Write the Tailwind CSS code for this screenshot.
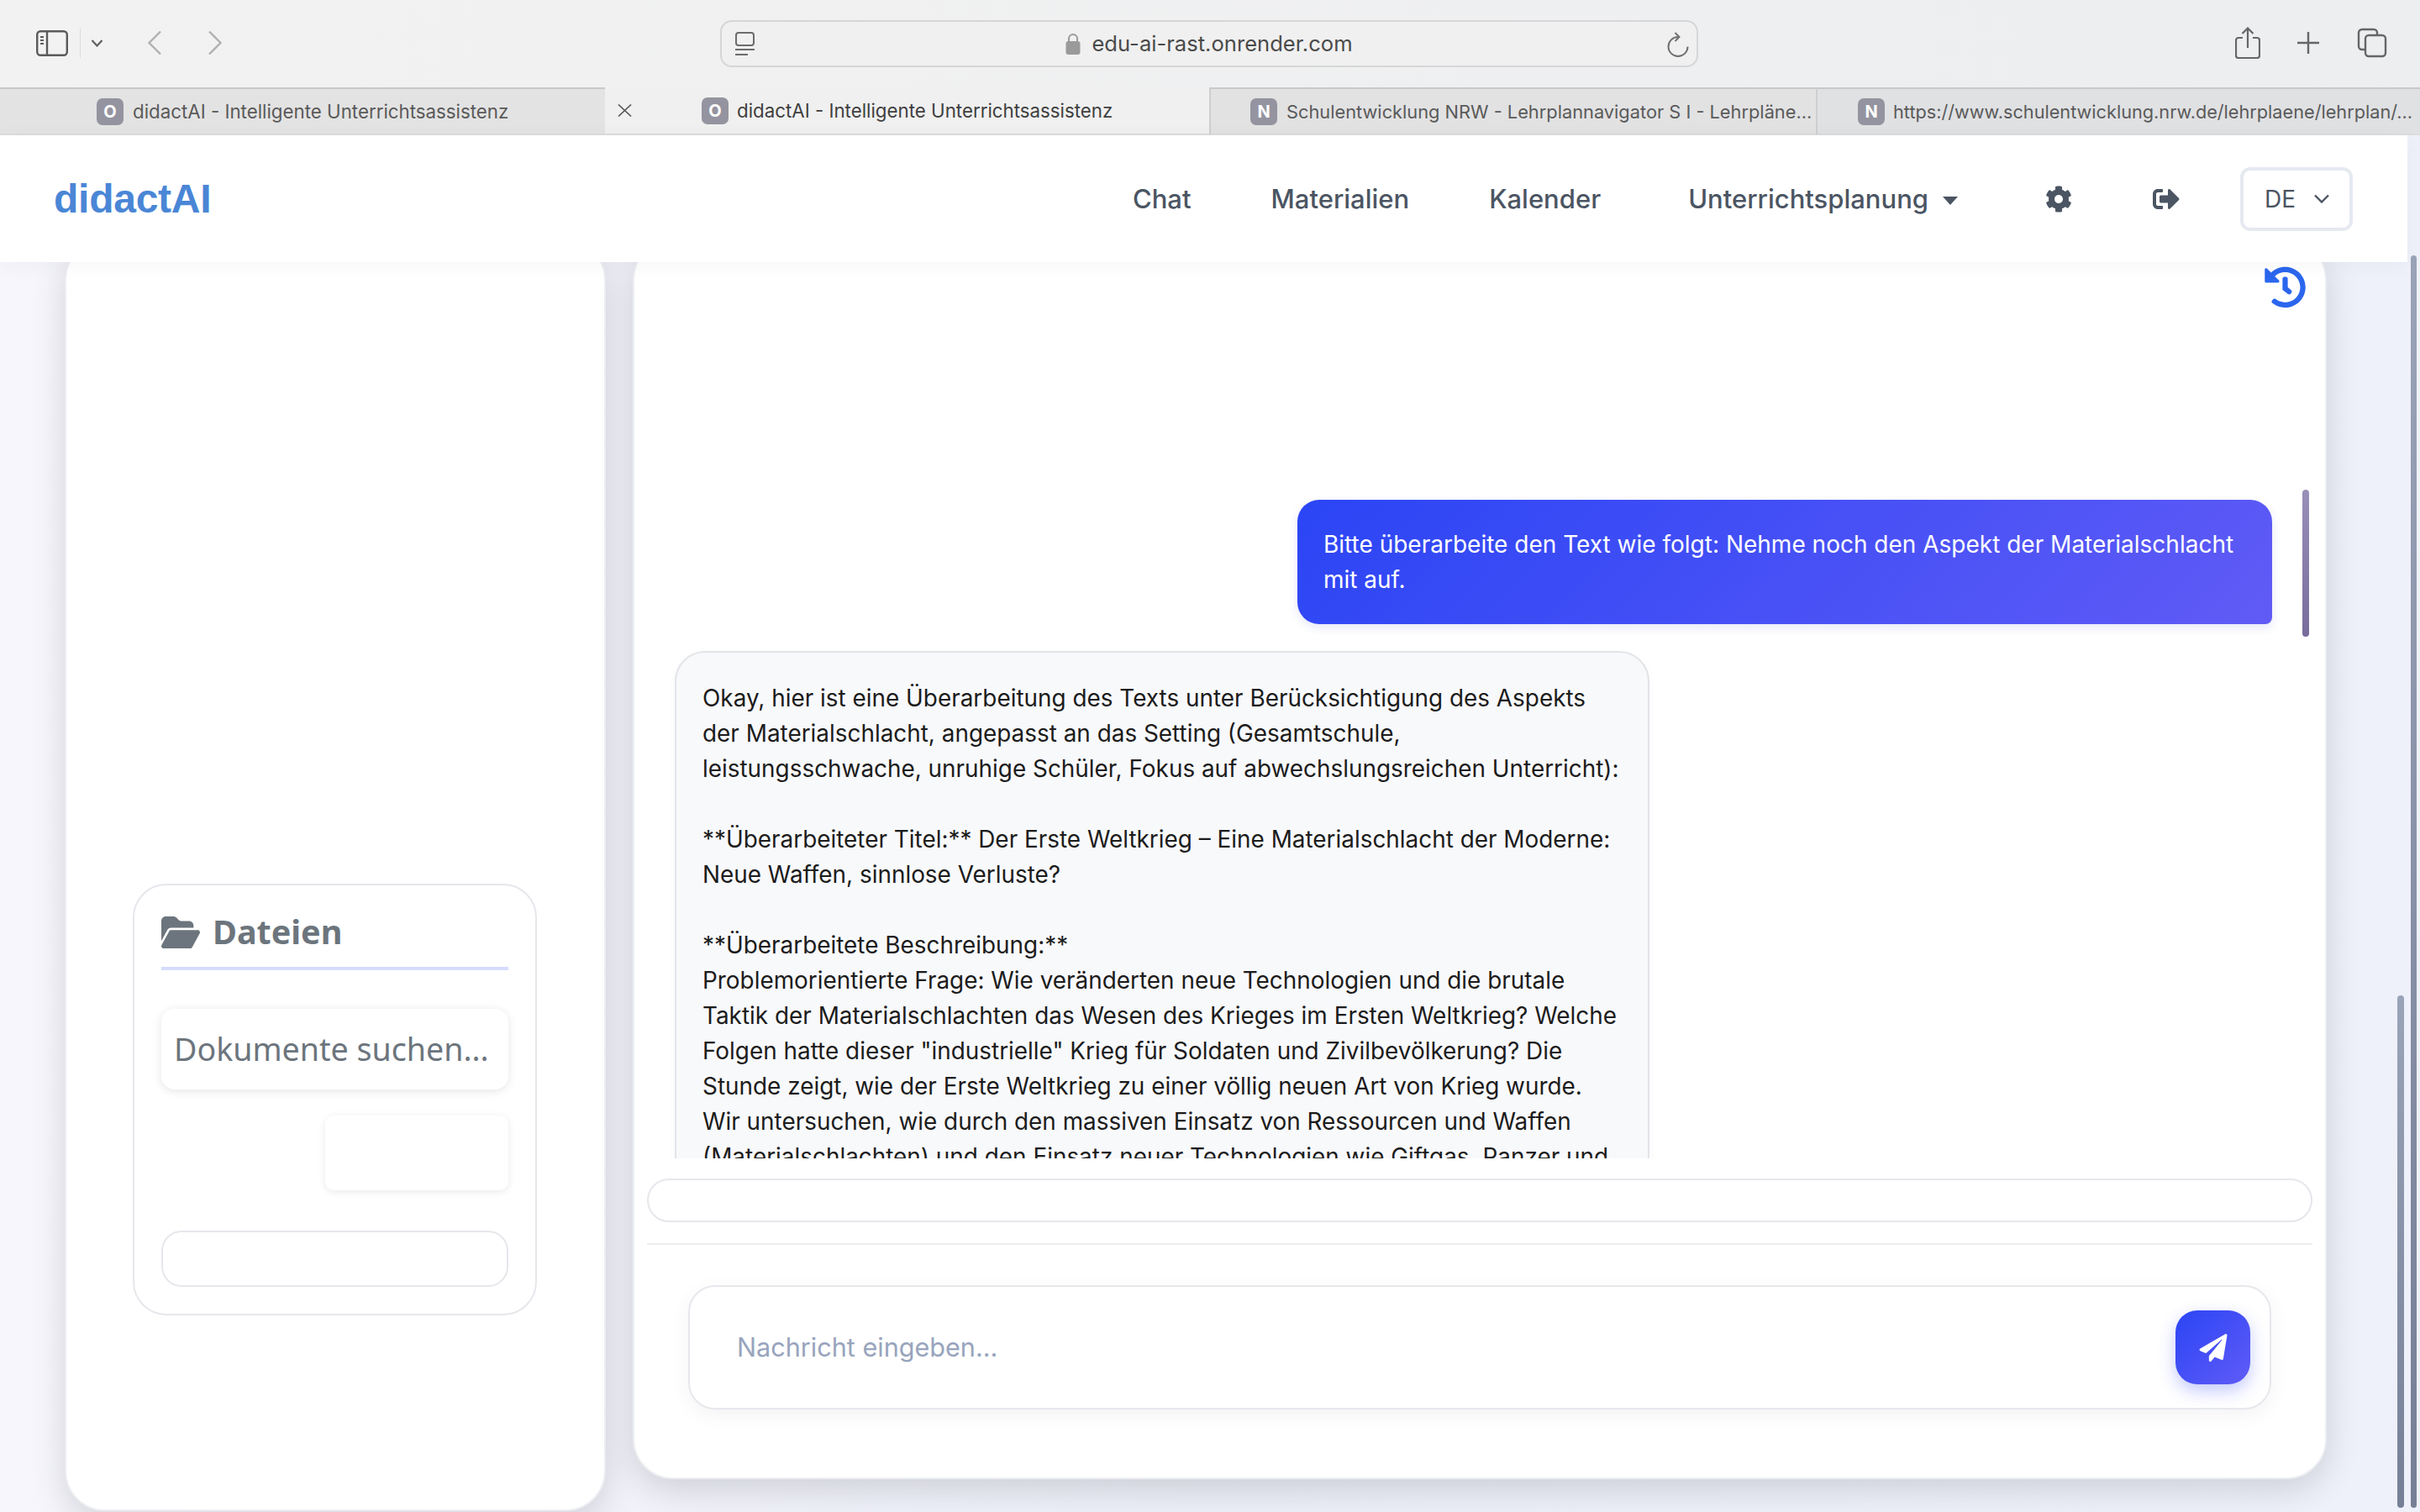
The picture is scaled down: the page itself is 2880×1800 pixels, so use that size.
<!DOCTYPE html>
<html lang="de">
<head>
<meta charset="utf-8">
<title>didactAI</title>
<script src="https://cdn.jsdelivr.net/npm/@tailwindcss/browser@4"></script>
</head>
<body class="m-0 font-['Inter',sans-serif]">
<div class="w-[2880px] h-[1800px] flex flex-col overflow-hidden bg-[#eef1f9]">
  <!-- toolbar -->
  <div class="h-[104px] flex items-start bg-gradient-to-r from-[#f2f2f2] to-[#edeef0] shrink-0">
    <div class="w-[857px] h-full relative shrink-0 flex items-center text-[#5c5c5c]">
      <svg class="ml-[43px] mt-[-2px]" width="38" height="31" viewBox="0 0 38 31" fill="none" stroke="#5a5a5a" stroke-width="2.4"><rect x="1.2" y="1.2" width="35.6" height="28.6" rx="4"/><path d="M13 1v29"/><path d="M5 8h4M5 12h4M5 16h4" stroke-width="2"/></svg>
      <div class="w-px h-[36px] bg-[#dcdcdc] ml-[14px] mt-[-2px]"></div>
      <svg class="ml-[12px] mt-[-2px]" width="15" height="9" viewBox="0 0 15 9" fill="none" stroke="#606060" stroke-width="2.2"><path d="M1.5 1l6 6.5 6-6.5"/></svg>
      <svg class="ml-[52px] mt-[-2px]" width="18" height="30" viewBox="0 0 18 30" fill="none" stroke="#b0b0b0" stroke-width="2.4"><path d="M16 1.5L2.5 15 16 28.5"/></svg>
      <svg class="ml-[54px] mt-[-2px]" width="18" height="30" viewBox="0 0 18 30" fill="none" stroke="#b0b0b0" stroke-width="2.4"><path d="M2 1.5L15.5 15 2 28.5"/></svg>
    </div>
    <div class="w-[1164px] h-[56px] mt-[24px] border-2 border-[#d6d6d6] rounded-[14px] bg-[#f0f0f0] flex items-center relative shrink-0">
      <svg class="absolute left-[15px] top-[12px]" width="25" height="30" viewBox="0 0 25 30" fill="none" stroke="#6c6c6c" stroke-width="2"><rect x="2" y="1" width="21" height="15" rx="3"/><path d="M1 21h23M1 27h15"/></svg>
      <div class="flex items-center justify-center w-full gap-[13px]">
        <svg width="18" height="26" viewBox="0 0 18 26"><path d="M4 11V7a5 5 0 0 1 10 0v4" fill="none" stroke="#9a9a9a" stroke-width="2"/><rect x="0.5" y="10" width="17" height="16" rx="3" fill="#9a9a9a"/></svg>
        <span class="text-[25.6px] leading-none text-[#4a4a4a]">edu-ai-rast.onrender.com</span>
      </div>
      <svg class="absolute right-[9px] top-[12px]" width="26" height="30" viewBox="0 0 26 30" fill="none" stroke="#707070" stroke-width="2"><path d="M13 6A11.5 11.5 0 1 0 24.5 17.5"/><path d="M9.5 1l5 5-5 5"/></svg>
    </div>
    <div class="flex-1 flex items-center h-full pl-[639px] text-[#5c5c5c]">
      <svg class="mt-[-2px]" width="30" height="38" viewBox="0 0 30 38" fill="none" stroke="#666" stroke-width="2.2"><path d="M9 13H4a3 3 0 0 0-3 3v18a3 3 0 0 0 3 3h22a3 3 0 0 0 3-3V16a3 3 0 0 0-3-3h-5"/><path d="M15 25V2M8.5 8L15 1.5 21.5 8"/></svg>
      <svg class="ml-[43px] mt-[-2px]" width="28" height="28" viewBox="0 0 28 28" fill="none" stroke="#666" stroke-width="2.4"><path d="M14 1v26M1 14h26"/></svg>
      <svg class="ml-[44px] mt-[-2px]" width="36" height="36" viewBox="0 0 36 36" fill="none" stroke="#666" stroke-width="2.4"><path d="M9 26H6a4 4 0 0 1-4-4V6a4 4 0 0 1 4-4h14a4 4 0 0 1 4 4v3"/><rect x="10" y="9" width="24" height="25" rx="4"/></svg>
    </div>
  </div>
  <!-- tabs -->
  <div class="h-[57px] flex shrink-0 text-[22.3px] leading-none">
    <div class="w-[720px] shrink-0 overflow-hidden bg-[#e3e3e3] border-t-2 border-b-2 border-t-[#c8c8c8] border-b-[#dcdcdc] flex items-center pl-[115px] gap-[11px] text-[#5a5a5a]">
      <span class="w-[32px] h-[32px] shrink-0 rounded-[7px] bg-[#9494a0] text-white font-bold text-[20px] flex items-center justify-center">O</span>
      <span class="whitespace-nowrap pt-[2px]">didactAI - Intelligente Unterrichtsassistenz</span>
    </div>
    <div class="w-[719px] shrink-0 overflow-hidden bg-[#f0f0f0] border-b-2 border-[#dcdcdc] flex items-center pl-[15px] text-[#3f3f3f]">
      <svg width="17" height="15" viewBox="0 0 17 15" fill="none" stroke="#555" stroke-width="1.6"><path d="M1 0.5l15 14M16 0.5l-15 14"/></svg>
      <span class="ml-[83px] w-[32px] h-[32px] shrink-0 rounded-[7px] bg-[#9494a0] text-white font-bold text-[20px] flex items-center justify-center">O</span>
      <span class="ml-[10px] whitespace-nowrap pt-[2px]">didactAI - Intelligente Unterrichtsassistenz</span>
    </div>
    <div class="w-[722px] shrink-0 overflow-hidden bg-[#e2e2e3] border-t-2 border-b-2 border-l-2 border-t-[#c8c8c8] border-b-[#dcdcdc] border-l-[#cfcfcf] flex items-center pl-[47px] gap-[11px] text-[#5a5a5a]">
      <span class="w-[32px] h-[32px] shrink-0 rounded-[7px] bg-[#9494a0] text-white font-bold text-[20px] flex items-center justify-center">N</span>
      <span class="whitespace-nowrap pt-[2px] text-[21.8px]">Schulentwicklung NRW - Lehrplannavigator S I - Lehrpläne...</span>
    </div>
    <div class="w-[719px] shrink-0 overflow-hidden bg-[#e0e1e3] border-t-2 border-b-2 border-l-2 border-t-[#c8c8c8] border-b-[#dcdcdc] border-l-[#cfcfcf] flex items-center pl-[48px] gap-[10px] text-[#5a5a5a]">
      <span class="w-[32px] h-[32px] shrink-0 rounded-[7px] bg-[#9494a0] text-white font-bold text-[20px] flex items-center justify-center">N</span>
      <span class="whitespace-nowrap pt-[2px] text-[21.7px]">https://www.schulentwicklung.nrw.de/lehrplaene/lehrplan/...</span>
    </div>
  </div>
  <!-- page -->
  <div class="flex-1 relative bg-gradient-to-r from-[#f6f6fc] via-[#eceef8] to-[#eef1fa] min-h-0">
    <header class="relative z-10 w-[2865px] h-[151px] bg-white shadow-[0_4px_24px_rgba(0,0,0,0.04)] flex items-center pl-[64px] pr-[65px] text-[#4b5563] font-medium">
      <span class="font-['Liberation_Sans',sans-serif] font-bold text-[48px] leading-none text-[#4a86d6] tracking-[-0.25px]">didactAI</span>
      <nav class="ml-auto flex items-center text-[31px] leading-none">
        <span>Chat</span>
        <span class="ml-[95px]">Materialien</span>
        <span class="ml-[95px]">Kalender</span>
        <span class="ml-[104px]">Unterrichtsplanung</span>
        <svg class="ml-[17px] mt-[4px]" width="18" height="10" viewBox="0 0 18 10"><path d="M0 0h18L9 10z" fill="#4b5563"/></svg>
        <svg class="ml-[104px]" width="32" height="32" viewBox="0 0 512 512" fill="#4b5563"><path d="M487.4 315.7l-42.6-24.6c4.3-23.2 4.3-47 0-70.2l42.6-24.6c4.9-2.8 7.1-8.6 5.5-14-11.1-35.6-30-67.8-54.7-94.6-3.8-4.1-10-5.1-14.8-2.3L380.8 110c-17.9-15.4-38.5-27.3-60.8-35.1V25.8c0-5.6-3.9-10.5-9.4-11.7-36.7-8.2-74.3-7.8-109.2 0-5.5 1.2-9.4 6.1-9.4 11.7V75c-22.2 7.9-42.8 19.8-60.8 35.1L88.7 85.5c-4.9-2.8-11-1.9-14.8 2.3-24.7 26.7-43.6 58.9-54.7 94.6-1.7 5.4.6 11.2 5.5 14L67.3 221c-4.3 23.2-4.3 47 0 70.2l-42.6 24.6c-4.9 2.8-7.1 8.6-5.5 14 11.1 35.6 30 67.8 54.7 94.6 3.8 4.1 10 5.1 14.8 2.3l42.6-24.6c17.9 15.4 38.5 27.3 60.8 35.1v49.2c0 5.6 3.9 10.5 9.4 11.7 36.7 8.2 74.3 7.8 109.2 0 5.5-1.2 9.4-6.1 9.4-11.7v-49.2c22.2-7.9 42.8-19.8 60.8-35.1l42.6 24.6c4.9 2.8 11 1.9 14.8-2.3 24.7-26.7 43.6-58.9 54.7-94.6 1.5-5.5-.7-11.3-5.6-14.1zM256 336c-44.1 0-80-35.9-80-80s35.9-80 80-80 80 35.9 80 80-35.9 80-80 80z"/></svg>
        <svg class="ml-[96px]" width="32" height="32" viewBox="0 0 512 512" fill="#4b5563"><path d="M497 273L329 441c-15 15-41 4.5-41-17v-96H152c-13.3 0-24-10.7-24-24v-96c0-13.3 10.7-24 24-24h136V88c0-21.4 25.9-32 41-17l168 168c9.3 9.4 9.3 24.6 0 34zM192 436v-40c0-6.6-5.4-12-12-12H96c-17.7 0-32-14.3-32-32V160c0-17.7 14.3-32 32-32h84c6.6 0 12-5.4 12-12V76c0-6.6-5.4-12-12-12H96c-53 0-96 43-96 96v192c0 53 43 96 96 96h84c6.6 0 12-5.4 12-12z"/></svg>
        <div class="ml-[72px] w-[134px] h-[76px] border-[4px] border-[#e5e9f0] rounded-[12px] flex items-center pl-[25px] text-[28px] font-normal">
          <span>DE</span>
          <svg class="ml-[21px]" width="20" height="11" viewBox="0 0 20 11" fill="none" stroke="#4b5563" stroke-width="2.4"><path d="M2 1.5l8 8 8-8"/></svg>
        </div>
      </nav>
    </header>
    <main class="flex pl-[77px] gap-[32px] mt-[-27px]">
      <!-- sidebar -->
      <aside class="w-[644px] h-[1514px] shrink-0 bg-white rounded-[48px] border-2 border-[#eceef2] shadow-[0_12px_40px_rgba(0,0,0,0.14)] pl-[79px] pr-[80px] pt-[765px]">
        <div class="h-[514px] border-2 border-[#e5e7eb] rounded-[40px] px-[32px] pt-[36px]">
          <div class="flex items-center h-[40px] gap-[15px] text-[#6c757d]">
            <svg width="46" height="38" viewBox="0 32 576 448" preserveAspectRatio="none" fill="#6c757d"><path d="M88.7 223.8L0 375.8V96C0 60.7 28.7 32 64 32H181.5c17 0 33.3 6.7 45.3 18.7l26.5 26.5c12 12 28.3 18.7 45.3 18.7H416c35.3 0 64 28.7 64 64v32H144c-22.8 0-43.8 12.1-55.3 31.8zm27.6 16.1C122.1 230 132.6 224 144 224H544c11.5 0 22 6.1 27.7 16.1s5.7 22.2-.1 32.1l-112 192C453.9 474 443.4 480 432 480H32c-11.5 0-22-6.1-27.7-16.1s-5.7-22.2 .1-32.1l112-192z"/></svg>
            <span class="font-['Noto_Sans',sans-serif] font-bold text-[39.5px] leading-none">Dateien</span>
          </div>
          <div class="h-[4px] bg-[#d6dcff] mt-[21px]"></div>
          <div class="h-[96px] mt-[46px] rounded-[16px] bg-white shadow-[0_2px_12px_rgba(0,0,0,0.10)] flex items-center pl-[15px] text-[#6c757d] font-['Noto_Sans',sans-serif] text-[37.6px] leading-none whitespace-nowrap">Dokumente suchen...</div>
          <div class="flex justify-end mt-[31px]">
            <div class="w-[218px] h-[89px] rounded-[10px] bg-white shadow-[0_2px_10px_rgba(0,0,0,0.09)]"></div>
          </div>
          <div class="h-[67px] mt-[48px] rounded-[24px] border-2 border-[#e5e7eb] bg-white"></div>
        </div>
      </aside>
      <!-- chat -->
      <section class="relative w-[2016px] h-[1476px] shrink-0 bg-white rounded-[48px] border-2 border-[#eceef2] shadow-[0_12px_40px_rgba(0,0,0,0.14)] flex flex-col">
        <svg class="absolute right-[22px] top-[30px]" width="51" height="50" viewBox="0 0 512 512" fill="#2b66ee"><path d="M504 255.531c.253 136.64-111.18 248.372-247.82 248.468-59.015.042-113.223-20.53-155.822-54.911-11.077-8.94-11.905-25.541-1.839-35.607l11.267-11.267c8.609-8.609 22.353-9.551 31.891-1.984C173.062 425.135 212.781 440 256 440c101.705 0 184-82.311 184-184 0-101.705-82.311-184-184-184-48.814 0-93.149 18.969-126.068 49.932l50.754 50.754c10.08 10.08 2.941 27.314-11.313 27.314H24c-8.837 0-16-7.163-16-16V38.627c0-14.254 17.234-21.393 27.314-11.314l49.372 49.372C129.209 34.136 189.552 8 256 8c136.81 0 247.747 110.78 248 247.531zm-180.912 78.784l9.823-12.63c8.138-10.463 6.253-25.542-4.21-33.679L288 256.349V152c0-13.255-10.745-24-24-24h-16c-13.255 0-24 10.745-24 24v135.651l65.409 50.874c10.463 8.137 25.541 6.253 33.679-4.21z"/></svg>
        <div class="absolute left-[1985px] top-[296px] w-[8px] h-[175px] rounded-full bg-gradient-to-b from-[#9a8fb9] to-[#786c9c]"></div>
        <div class="h-[1092px] overflow-hidden shrink-0 pt-[308px] px-[48px] text-[28px] leading-[42px] flex flex-col">
          <div class="self-end mr-[15px] w-[1160px] h-[148px] shrink-0 rounded-[26px] rounded-br-[8px] bg-[linear-gradient(135deg,#2b45f5,#605bf6)] text-white pl-[31px] pr-[20px] pt-[32px] shadow-[0_4px_12px_rgba(40,60,200,0.12)] whitespace-nowrap">
            Bitte überarbeite den Text wie folgt: Nehme noch den Aspekt der Materialschlacht<br>mit auf.
          </div>
          <div class="mt-[32px] w-[1160px] shrink-0 rounded-[36px] border-2 border-[#e2e4e8] bg-[#f8f9fb] pl-[31px] pr-[32px] pt-[33px] pb-[40px] text-[27.9px] text-[#1c1c1c] whitespace-nowrap shadow-[0_4px_12px_rgba(0,0,0,0.03)]">
            Okay, hier ist eine Überarbeitung des Texts unter Berücksichtigung des Aspekts<br>
            der Materialschlacht, angepasst an das Setting (Gesamtschule,<br>
            leistungsschwache, unruhige Schüler, Fokus auf abwechslungsreichen Unterricht):<br>
            <br>
            **Überarbeiteter Titel:** Der Erste Weltkrieg – Eine Materialschlacht der Moderne:<br>
            Neue Waffen, sinnlose Verluste?<br>
            <br>
            **Überarbeitete Beschreibung:**<br>
            Problemorientierte Frage: Wie veränderten neue Technologien und die brutale<br>
            Taktik der Materialschlachten das Wesen des Krieges im Ersten Weltkrieg? Welche<br>
            Folgen hatte dieser "industrielle" Krieg für Soldaten und Zivilbevölkerung? Die<br>
            Stunde zeigt, wie der Erste Weltkrieg zu einer völlig neuen Art von Krieg wurde.<br>
            Wir untersuchen, wie durch den massiven Einsatz von Ressourcen und Waffen<br>
            (Materialschlachten) und den Einsatz neuer Technologien wie Giftgas, Panzer und
          </div>
        </div>
        <div class="mx-[15px] h-[52px] mt-[24px] shrink-0 rounded-full border-2 border-[#e5e7eb] bg-white"></div>
        <div class="mx-[15px] h-[2px] mt-[25px] shrink-0 bg-[#eceef0]"></div>
        <div class="mx-[64px] h-[148px] mt-[48px] shrink-0 rounded-[32px] border-2 border-[#e6e8ec] bg-white shadow-[0_6px_24px_rgba(0,0,0,0.05)] flex items-center justify-between pl-[56px] pr-[23px]">
          <span class="text-[30.6px] leading-none text-[#98a4bd]">Nachricht eingeben...</span>
          <div class="w-[89px] h-[88px] rounded-[26px] bg-[linear-gradient(135deg,#2b45f5,#605bf6)] shadow-[0_8px_20px_rgba(60,80,250,0.3)] flex items-center justify-center">
            <svg width="34" height="33" viewBox="0 0 512 512" fill="#fff"><path d="M476 3.2L12.5 270.6c-18.1 10.4-15.8 35.6 2.2 43.2L121 358.4l287.3-253.2c5.5-4.9 13.3 2.6 8.6 8.3L176 407v80.5c0 23.6 28.5 32.9 42.5 15.8L282 426l124.6 52.2c14.2 6 30.4-2.9 33-18.2l72-432C515 7.8 493.3-6.8 476 3.2z"/></svg>
          </div>
        </div>
      </section>
    </main>
    <!-- page scrollbars -->
    <div class="absolute left-[2853px] top-[1024px] bottom-[5px] w-[8px] rounded-full bg-gradient-to-b from-[#9aa3b8] to-[#777f97]"></div>
    <div class="absolute left-[2869px] top-[143px] bottom-[5px] w-[7px] rounded-full bg-gradient-to-b from-[#9aa3b8] to-[#777f97]"></div>
  </div>
</div>
</body>
</html>
